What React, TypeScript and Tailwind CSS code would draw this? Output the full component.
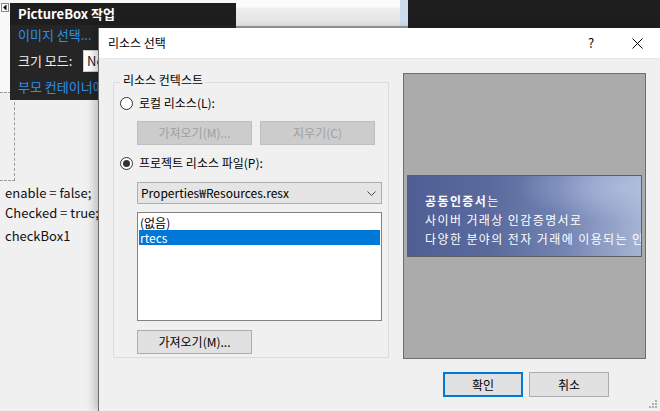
import React from "react";

function Radio({ checked }: { checked: boolean }) {
  return (
    <span className="w-[13px] h-[13px] rounded-full border border-[#333333] bg-white flex items-center justify-center shrink-0">
      {checked && <span className="w-[7px] h-[7px] rounded-full bg-[#333333]" />}
    </span>
  );
}

function SmartTag() {
  return (
    <div className="absolute left-[10px] top-[3px] w-[226px] h-[97px] bg-[#252526] text-white flex flex-col">
      <div className="h-[22px] flex items-center pl-[8px] font-bold text-[13px] bg-[#1e1e1e]">PictureBox 작업</div>
      <div className="h-[20px] flex items-center pl-[8px] text-[13px] text-[#2f8fe6] whitespace-nowrap">이미지 선택...</div>
      <div className="h-[22px] mt-[5px] flex items-center pl-[8px] text-[13px] text-[#f0f0f0] whitespace-nowrap">
        <span>크기 모드:</span>
        <span className="ml-auto w-[153px] h-[22px] bg-white border border-[#cccccc] text-[#222222] flex items-center pl-[3px]">Normal</span>
      </div>
      <div className="h-[20px] mt-[5px] flex items-center pl-[8px] text-[13px] text-[#2f8fe6] whitespace-nowrap">부모 컨테이너에서 도킹</div>
    </div>
  );
}

function Background() {
  return (
    <div className="flex flex-col w-full h-full">
      <div className="h-[28px] flex shrink-0">
        <div className="w-[236px] bg-[#f8f8f8] pt-[3px] pl-[1px]">
          <svg width="8" height="9" viewBox="0 0 8 9">
            <rect x="0.5" y="0.5" width="7" height="8" fill="#ffffff" stroke="#8a8a8a" />
            <polygon points="2,4.5 5.5,1.5 5.5,7.5" fill="#000000" />
          </svg>
        </div>
        <div className="w-[164px] bg-[linear-gradient(180deg,#fbfbfb_0%,#fbfbfb_25%,#ececec_35%,#e4e4e4_100%)] border-b-2 border-[#9a9a9a]" />
        <div className="w-[8px] bg-[#cddcef] border-b-2 border-[#9a9a9a]" />
        <div className="flex-1 bg-[#1e1e1e]" />
      </div>
      <div className="flex flex-col w-[98px]">
        <div className="h-[64px] w-[10px] bg-[#f8f8f8]" />
        <div className="h-[89px] w-[15px] border-t border-r border-b border-dashed border-[#9a9a9a]" />
        <div className="mt-[3px] pl-[5px] h-[18px] leading-[18px] text-[13px] text-[#111111] whitespace-nowrap">enable = false;</div>
        <div className="mt-[2px] pl-[5px] h-[18px] leading-[18px] text-[13px] text-[#111111] whitespace-nowrap">Checked = true;</div>
        <div className="mt-[5px] pl-[5px] h-[18px] leading-[18px] text-[13px] text-[#111111] whitespace-nowrap">checkBox1</div>
      </div>
    </div>
  );
}

function Dialog() {
  return (
    <div className="absolute left-[98px] top-[28px] right-0 bottom-0 bg-[#f0f0f0] border-l border-[#6b6b6b] shadow-[-4px_0_8px_rgba(0,0,0,0.2)] flex flex-col text-[12px] text-black">
      {/* title bar */}
      <div className="h-[31px] bg-white border-b border-[#e6e6e6] flex items-center shrink-0">
        <span className="ml-[9px]">리소스 선택</span>
        <span className="flex-1" />
        <span className="w-[46px] text-center text-[13px]">?</span>
        <span className="w-[46px] flex items-center justify-center">
          <svg width="11" height="11" viewBox="0 0 11 11">
            <path d="M0.5 0.5 L10.5 10.5 M10.5 0.5 L0.5 10.5" stroke="#000000" strokeWidth="1" />
          </svg>
        </span>
      </div>
      {/* body */}
      <div className="relative flex-1 flex flex-col">
        <div className="flex items-start pl-[14px] pt-[14px]">
          {/* group box */}
          <div className="relative mt-[9px] w-[276px] h-[276px] border border-[#dcdcdc] flex flex-col pt-[12px] pl-[6px]">
            <span className="absolute left-[6px] top-[-11px] px-[3px] bg-[#f0f0f0] leading-[16px]">리소스 컨텍스트</span>
            <div className="h-[16px] flex items-center gap-[6px]">
              <Radio checked={false} />
              <span>로컬 리소스(L):</span>
            </div>
            <div className="ml-[17px] mt-[10px] flex gap-[8px]">
              <div className="w-[115px] h-[24px] bg-[#cccccc] border border-[#bfbfbf] text-[#a0a0a0] flex items-center justify-center">가져오기(M)...</div>
              <div className="w-[115px] h-[24px] bg-[#cccccc] border border-[#bfbfbf] text-[#a0a0a0] flex items-center justify-center">지우기(C)</div>
            </div>
            <div className="h-[16px] mt-[10px] flex items-center gap-[6px]">
              <Radio checked={true} />
              <span>프로젝트 리소스 파일(P):</span>
            </div>
            <div className="ml-[17px] mt-[11px] w-[245px] h-[22px] bg-[#e5e5e5] border border-[#adadad] flex items-center pl-[3px] pr-[5px]">
              <span className="flex-1">Properties₩Resources.resx</span>
              <svg width="9" height="5" viewBox="0 0 9 5">
                <polyline points="0.5,0.5 4.5,4.5 8.5,0.5" fill="none" stroke="#444444" strokeWidth="1" />
              </svg>
            </div>
            <div className="ml-[17px] mt-[8px] w-[245px] h-[109px] bg-white border border-[#828282] pt-[2px] px-[1px] flex flex-col">
              <div className="h-[15px] leading-[15px] pl-[1px] overflow-hidden">(없음)</div>
              <div className="h-[15px] leading-[15px] pl-[1px] overflow-hidden bg-[#0078d7] text-white">rtecs</div>
            </div>
            <div className="ml-[17px] mt-[9px] w-[115px] h-[24px] bg-[#e1e1e1] border border-[#adadad] flex items-center justify-center">가져오기(M)...</div>
          </div>
          {/* preview */}
          <div className="ml-[14px] w-[243px] h-[286px] bg-[#ababab] border border-[#6d6d6d] flex items-center justify-center px-[3px]">
            <div className="w-full h-[82px] border border-[#5f5f5f] overflow-hidden bg-[radial-gradient(ellipse_at_92%_15%,rgba(185,198,228,0.6)_0%,rgba(185,198,228,0)_35%),linear-gradient(90deg,#4f5f95_0%,#5a6a9d_35%,#7181b0_65%,#93a3c8_88%,#a6b4d4_100%)] text-white text-[12px] pl-[17px] pt-[15px] flex flex-col whitespace-nowrap tracking-[1.4px]">
              <div className="h-[19px] leading-[19px]"><span className="font-bold">공동인증서</span>는</div>
              <div className="h-[19px] leading-[19px]">사이버 거래상 인감증명서로</div>
              <div className="h-[19px] leading-[19px]">다양한 분야의 전자 거래에 이용되는 인</div>
            </div>
          </div>
        </div>
        {/* buttons */}
        <div className="mt-[13px] flex justify-end pr-[51px] gap-[6px]">
          <div className="w-[80px] h-[25px] bg-[#e1e1e1] border-2 border-[#0078d7] flex items-center justify-center">확인</div>
          <div className="w-[80px] h-[25px] bg-[#e1e1e1] border border-[#adadad] flex items-center justify-center">취소</div>
        </div>
        <div className="absolute right-[3px] bottom-[3px]">
          <svg width="8" height="8" viewBox="0 0 8 8">
            <rect x="6" y="0" width="2" height="2" fill="#b0b0b0" />
            <rect x="3" y="3" width="2" height="2" fill="#b0b0b0" />
            <rect x="6" y="3" width="2" height="2" fill="#b0b0b0" />
            <rect x="0" y="6" width="2" height="2" fill="#b0b0b0" />
            <rect x="3" y="6" width="2" height="2" fill="#b0b0b0" />
            <rect x="6" y="6" width="2" height="2" fill="#b0b0b0" />
          </svg>
        </div>
      </div>
    </div>
  );
}

export default function App() {
  return (
    <div className="relative w-[660px] h-[411px] overflow-hidden bg-[#f0f0f0] font-['Noto_Sans_CJK_KR','Noto_Sans',sans-serif]">
      <Background />
      <SmartTag />
      <Dialog />
    </div>
  );
}
